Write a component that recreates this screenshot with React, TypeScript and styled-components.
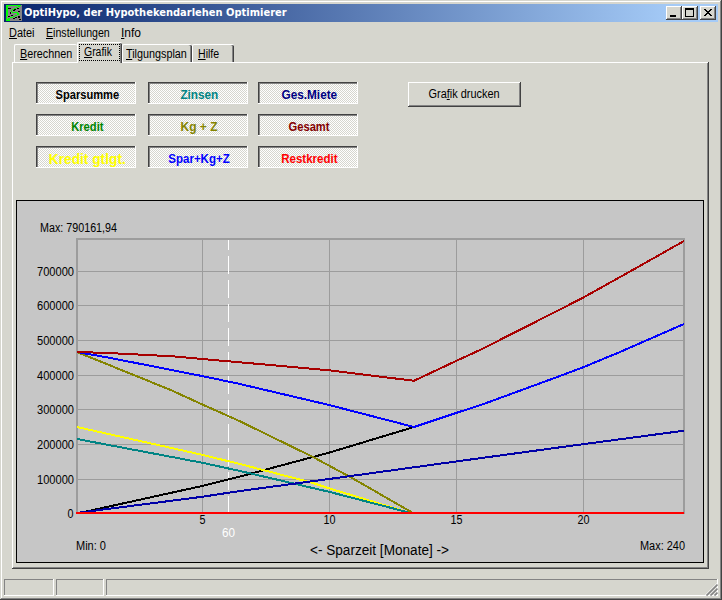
import React from "react";
import styled, { createGlobalStyle, css } from "styled-components";

const FACE = "#d6d6ce";
const DARK = "#424242";
const SHADE = "#848484";

const raised = css`
  box-shadow: inset -1px -1px ${DARK}, inset 1px 1px #fff, inset -2px -2px ${SHADE};
`;
const sunken = css`
  box-shadow: inset -1px -1px #fff, inset 1px 1px ${DARK}, inset 2px 2px ${SHADE};
`;

const Global = createGlobalStyle`
  * { box-sizing: border-box; }
  body { margin: 0; background: ${FACE}; overflow: hidden; }
`;

const Window = styled.main`
  width: 722px;
  height: 600px;
  padding: 4px;
  display: flex;
  flex-direction: column;
  background: ${FACE};
  color: #000;
  font: 12px/14px "Liberation Sans", Arial, sans-serif;
  box-shadow: inset -1px -1px ${DARK}, inset 1px 1px ${FACE}, inset -2px -2px ${SHADE}, inset 2px 2px #fff;
`;

const TitleBar = styled.header`
  height: 18px;
  flex: none;
  display: flex;
  align-items: center;
  padding: 0 2px;
  background: linear-gradient(90deg, #08246b, #a5cbf7 94%);
`;

const Title = styled.h1`
  flex: 1;
  margin: 0 0 0 2px;
  color: #fff;
  font: bold 11px/18px "DejaVu Sans Condensed", "DejaVu Sans", sans-serif;
  font-stretch: condensed;
  letter-spacing: 0.01px;
  white-space: nowrap;
`;

const CaptionButton = styled.button<{ $gap?: number }>`
  width: 16px;
  height: 14px;
  margin: 0 0 0 ${(p) => p.$gap ?? 0}px;
  padding: 0;
  border: 0;
  background: ${FACE};
  ${raised}
  svg { display: block; }
`;

const Fit = styled.span<{ $k: number; $left?: boolean }>`
  display: inline-block;
  white-space: pre;
  transform: scaleX(${(p) => p.$k});
  transform-origin: ${(p) => (p.$left ? "left" : "center")} center;
`;

const Key = styled.span`
  text-decoration: underline;
  text-decoration-thickness: 1px;
  text-underline-offset: 1px;
  text-decoration-skip-ink: none;
`;

const MenuBar = styled.nav`
  height: 20px;
  flex: none;
  display: flex;
  padding: 4px 0 0 5px;
`;

const MenuItem = styled.div<{ $w: number }>`
  width: ${(p) => p.$w}px;
`;

const Tabs = styled.div`
  height: 20px;
  flex: none;
  display: flex;
  align-items: flex-end;
  padding-left: 10px;
`;

const Tab = styled.div<{ $w: number; $active?: boolean; $edge?: boolean; $pad?: number }>`
  width: ${(p) => p.$w}px;
  height: ${(p) => (p.$active ? 21 : 18)}px;
  margin-bottom: ${(p) => (p.$active ? -1 : 0)}px;
  padding: ${(p) => (p.$active ? "1px 0 0 1px" : `2px 0 0 ${p.$pad ?? 5}px`)};
  position: relative;
  z-index: ${(p) => (p.$active ? 1 : 0)};
  background: ${FACE};
  border-top: 1px solid #fff;
  border-left: 1px solid #fff;
  border-radius: 2px 2px 0 0;
  ${(p) => p.$edge !== false && css`box-shadow: inset -1px 0 ${DARK}, inset -2px 0 ${SHADE};`}
`;

const Focus = styled.div`
  width: 41px;
  height: 17px;
  padding: 0 0 0 4px;
  border: 1px dotted #000;
`;

const Page = styled.section`
  width: 697px;
  height: 507px;
  flex: none;
  margin-left: 8px;
  padding: 20px 5px 6px 4px;
  display: flex;
  flex-direction: column;
  justify-content: space-between;
  ${raised}
`;

const Controls = styled.div`
  display: flex;
  align-items: flex-start;
  padding-left: 20px;
`;

const Series = styled.div`
  display: grid;
  grid-template-columns: 112px 110px 100px;
  row-gap: 10px;
  margin-right: 50px;
`;

const Toggle = styled.button<{ $color: string; $big?: boolean }>`
  width: 100px;
  height: 22px;
  padding: 3px 0 0 2px;
  border: 0;
  overflow: hidden;
  color: ${(p) => p.$color};
  font: bold ${(p) => (p.$big ? 14 : 12)}px/18px "Liberation Sans", Arial, sans-serif;
  background: repeating-conic-gradient(#fff 0 25%, ${FACE} 0 50%) 0 0 / 2px 2px;
  ${sunken}
`;

const PushButton = styled.button`
  width: 113px;
  height: 25px;
  padding: 0 0 1px;
  border: 0;
  background: ${FACE};
  color: #000;
  font: 12px/14px "Liberation Sans", Arial, sans-serif;
  ${raised}
`;

const ChartFrame = styled.div`
  width: 688px;
  height: 363px;
  background: #c6c6c6;
  border: 1px solid #000;
  svg {
    display: block;
    font: 12px "Liberation Sans", Arial, sans-serif;
  }
`;

const AxisCaption = styled.text`
  font-size: 14px;
`;

const StatusBar = styled.footer`
  height: 17px;
  margin-top: 10px;
  display: flex;
  gap: 2px;
`;

const StatusCell = styled.div<{ $w?: number }>`
  ${(p) => (p.$w ? `width: ${p.$w}px;` : "flex: 1;")}
  display: flex;
  justify-content: flex-end;
  align-items: flex-end;
  box-shadow: inset -1px -1px #fff, inset 1px 1px ${SHADE};
`;

const series = [
  { label: "Sparsumme", color: "#000000", k: 0.925 },
  { label: "Zinsen", color: "#008484", k: 0.98 },
  { label: "Ges.Miete", color: "#000084", k: 0.98 },
  { label: "Kredit", color: "#008400", k: 0.93 },
  { label: "Kg + Z", color: "#848400", k: 1.0 },
  { label: "Gesamt", color: "#840000", k: 0.93 },
  { label: "Kredit gtlgt.", color: "#ffff00", k: 0.98, big: true },
  { label: "Spar+Kg+Z", color: "#0000ff", k: 0.96 },
  { label: "Restkredit", color: "#ff0000", k: 0.96 },
];

const curves = [
  { color: "#000", points: "77,513 84,512 202,486 240,476.5 329,452.7 414,427" },
  { color: "#ffff00", points: "77,427 202,454.8 240,464 313,483 329,488.3 407,512 410,513" },
  { color: "#008484", points: "77,439 202,462.7 240,471 329,491.8 407,512 410,513" },
  { color: "#848400", points: "77,352 170,389.7 202,404.3 240,421.3 313,457 352,478 413,513" },
  { color: "#0000a8", points: "77,513 84,512 202,496.8 240,491 329,479 456,461.5 560,447.3 684,430.7" },
  { color: "#0000ff", points: "77,352 109,357.7 202,376 240,384 329,405 414,427 456,413 480,405.3 560,376 583,367.3 620,352 684,324" },
  { color: "#a80000", points: "77,352 108,353 173,356.3 202,359 240,362.3 329,370.3 414,380.8 456,361 480,350 560,309.5 583,297.7 630,271.5 684,241" },
];

const rows = [
  [271, "700000"], [305, "600000"], [340, "500000"], [375, "400000"],
  [409, "300000"], [444, "200000"], [479, "100000"],
] as [number, string][];
const columns = [[202, "5"], [329, "10"], [456, "15"], [583, "20"]] as [number, string][];

const Label = ({ x, y, w, children, ...rest }: { x: number; y: number; w: number; children: string } & React.SVGProps<SVGTextElement>) => (
  <text x={x} y={y} textLength={w} lengthAdjust="spacingAndGlyphs" {...rest}>{children}</text>
);

const Chart = () => (
  <svg width="686" height="361" viewBox="17 201 686 361">
    <g fill="#9c9c9c" shapeRendering="crispEdges">
      {rows.map(([y]) => <rect key={y} x="76" y={y} width="608" height="1" />)}
      {columns.map(([x]) => <rect key={x} x={x} y="238" width="1" height="275" />)}
      <rect x="76" y="238" width="609" height="2" />
      <rect x="76" y="238" width="2" height="276" />
      <rect x="683" y="238" width="2" height="276" />
    </g>
    <line x1="228.5" x2="228.5" y1="240" y2="513" stroke="#fff" strokeDasharray="18 6" strokeDashoffset="8" shapeRendering="crispEdges" />
    <g fill="none" strokeWidth="2" shapeRendering="crispEdges">
      {curves.map((c) => <polyline key={c.color} points={c.points} stroke={c.color} />)}
    </g>
    <rect x="76" y="512" width="608" height="2" fill="#ff0000" />
    <Label x={40} y={232} w={77}>Max: 790161,94</Label>
    {rows.map(([y, t]) => <Label key={t} x={37} y={y + 5} w={37}>{t}</Label>)}
    <Label x={67.5} y={518} w={6}>0</Label>
    {columns.map(([x, t]) => <Label key={t} x={x + 0.5 - t.length * 3} y={524} w={t.length * 6}>{t}</Label>)}
    <Label x={222} y={537} w={13} fill="#fff">60</Label>
    <Label x={76} y={550} w={30}>Min: 0</Label>
    <Label x={640} y={550} w={45}>Max: 240</Label>
    <AxisCaption x={310} y={555} textLength={139} lengthAdjust="spacingAndGlyphs">{"<- Sparzeit [Monate] ->"}</AxisCaption>
  </svg>
);

const AppIcon = () => (
  <svg width="16" height="16" viewBox="0 0 16 16" shapeRendering="crispEdges">
    <path fill="#848484" d="M0 0h16v16H0z" />
    <path fill="#000" d="M2 3h3v1H2zM8 4h2v1H8zM11 3h2v1h-2zM4 7h1v2H4zM7 5h2v1H7zM2 11h2v1H2zM5 10h2v1H5zM9 12h2v1H9zM12 11h2v2h-2zM12 6h2v1h-2zM7 13h2v1H7zM13 14h2v1h-2z" />
    <path fill="#00ff00" d="M0 0h15v1H2v10H1v4H0zM12 1h2v1h-2zM10 2h2v1h-2zM8 3h2v1H8zM6 4h2v1H6zM5 5h1v2H5zM6 7h6v1H6zM11 8h2v2h-2zM9 10h2v1H9zM7 11h2v1H7zM4 12h3v1H4zM2 13h2v1H2zM1 14h3v2H0v-2z" />
  </svg>
);

export default function App() {
  return (
    <>
      <Global />
      <Window>
        <TitleBar>
          <AppIcon />
          <Title>OptiHypo, der Hypothekendarlehen Optimierer</Title>
          <CaptionButton aria-label="Minimieren">
            <svg width="16" height="14"><path d="M4 9h6v2H4z" /></svg>
          </CaptionButton>
          <CaptionButton aria-label="Maximieren">
            <svg width="16" height="14" shapeRendering="crispEdges"><path fillRule="evenodd" d="M3 2h9v9H3zM4 4v6h7V4z" /></svg>
          </CaptionButton>
          <CaptionButton aria-label="Schließen" $gap={2}>
            <svg width="16" height="14" shapeRendering="crispEdges">
              <path d="M4 3h2v1H4zM10 3h2v1h-2zM5 4h2v1H5zM9 4h2v1H9zM6 5h4v1H6zM7 6h2v1H7zM6 7h4v1H6zM5 8h2v1H5zM9 8h2v1H9zM4 9h2v1H4zM10 9h2v1h-2z" />
            </svg>
          </CaptionButton>
        </TitleBar>
        <MenuBar>
          <MenuItem $w={37}><Fit $k={0.91} $left><Key>D</Key>atei</Fit></MenuItem>
          <MenuItem $w={75}><Fit $k={0.885} $left><Key>E</Key>instellungen</Fit></MenuItem>
          <MenuItem $w={40}><Fit $k={1} $left><Key>I</Key>nfo</Fit></MenuItem>
        </MenuBar>
        <Tabs>
          <Tab $w={63} $edge={false}><Fit $k={0.9} $left><Key>B</Key>erechnen</Fit></Tab>
          <Tab $w={45} $active><Focus><Fit $k={0.87} $left><Key>G</Key>rafik</Fit></Focus></Tab>
          <Tab $w={70} $pad={3}><Fit $k={0.9} $left><Key>T</Key>ilgungsplan</Fit></Tab>
          <Tab $w={42}><Fit $k={0.88} $left><Key>H</Key>ilfe</Fit></Tab>
        </Tabs>
        <Page>
          <Controls>
            <Series>
              {series.map((s) => (
                <Toggle key={s.label} $color={s.color} $big={s.big}>
                  <Fit $k={s.k}>{s.label}</Fit>
                </Toggle>
              ))}
            </Series>
            <PushButton><Fit $k={0.91}>Gra<Key>f</Key>ik drucken</Fit></PushButton>
          </Controls>
          <ChartFrame><Chart /></ChartFrame>
        </Page>
        <StatusBar>
          <StatusCell $w={50} />
          <StatusCell $w={48} />
          <StatusCell>
            <svg width="13" height="13" viewBox="0 0 13 13">
              <path d="M0 12.5L12.5 0M4 12.5L12.5 4M8 12.5L12.5 8" stroke="#fff" />
              <path d="M1.5 12.5L12.5 1.5M5.5 12.5L12.5 5.5M9.5 12.5L12.5 9.5" stroke={SHADE} strokeWidth="1.7" />
            </svg>
          </StatusCell>
        </StatusBar>
      </Window>
    </>
  );
}
